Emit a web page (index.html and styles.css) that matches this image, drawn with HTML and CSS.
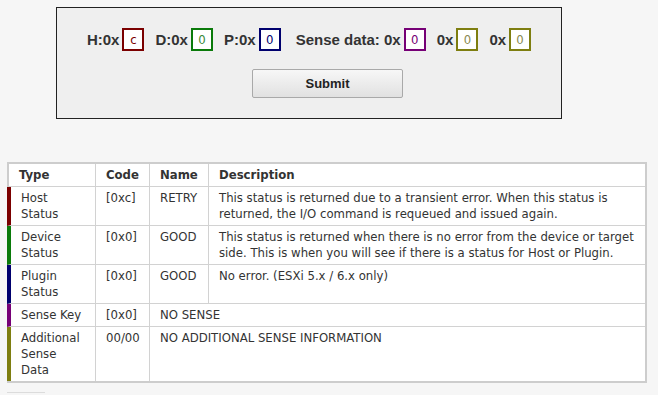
FILE: index.html
```html
<!DOCTYPE html>
<html lang="en">

<head>
    <meta charset="UTF-8">
    <meta name="viewport" content="width=device-width, initial-scale=1.0">
    <title>SCSI Sense Code Decoder</title>
    <link rel="stylesheet" href="styles.css">
</head>

<body>
    <!-- Formulario de codigos -->
    <div class="decoder">
        <div class="code-row">
            <span class="label">H:0x</span>
            <span class="code-box host">c</span>
            <span class="label">D:0x</span>
            <span class="code-box device">0</span>
            <span class="label">P:0x</span>
            <span class="code-box plugin">0</span>
            <span class="label wide">Sense data: 0x</span>
            <span class="code-box sense">0</span>
            <span class="label">0x</span>
            <span class="code-box extra">0</span>
            <span class="label">0x</span>
            <span class="code-box extra">0</span>
        </div>
        <button class="submit">Submit</button>
    </div>

    <!-- Tabla de resultados -->
    <table class="result">
        <thead>
            <tr>
                <th class="col-type">Type</th>
                <th class="col-code">Code</th>
                <th class="col-name">Name</th>
                <th class="col-desc">Description</th>
            </tr>
        </thead>
        <tbody>
            <tr class="row-host">
                <td>Host<br>Status</td>
                <td>[0xc]</td>
                <td>RETRY</td>
                <td>This status is returned due to a transient error. When this status is returned, the I/O command is requeued and issued again.</td>
            </tr>
            <tr class="row-device">
                <td>Device<br>Status</td>
                <td>[0x0]</td>
                <td>GOOD</td>
                <td>This status is returned when there is no error from the device or target side. This is when you will see if there is a status for Host or Plugin.</td>
            </tr>
            <tr class="row-plugin">
                <td>Plugin<br>Status</td>
                <td>[0x0]</td>
                <td>GOOD</td>
                <td>No error. (ESXi 5.x / 6.x only)</td>
            </tr>
            <tr class="row-sense">
                <td>Sense Key</td>
                <td>[0x0]</td>
                <td colspan="2">NO SENSE</td>
            </tr>
            <tr class="row-extra">
                <td>Additional<br>Sense<br>Data</td>
                <td>00/00</td>
                <td colspan="2">NO ADDITIONAL SENSE INFORMATION</td>
            </tr>
        </tbody>
    </table>
    <div class="next-rule"></div>
</body>

</html>
```

FILE: styles.css
```css
/* Estilos generales */
body {
    font-family: "DejaVu Sans Condensed", "DejaVu Sans", sans-serif;
    background-color: #f6f6f6;
    color: #333;
    margin: 0;
    padding: 7px 0 0 7px;
}

/* Caja del formulario */
.decoder {
    box-sizing: border-box;
    width: 506px;
    height: 112px;
    margin-left: 49px;
    padding: 20px 0 0 0;
    background-color: #efefef;
    border: 1px solid #222;
}

.code-row {
    display: flex;
    align-items: center;
    justify-content: center;
    height: 23px;
}

.label {
    font-family: "Liberation Sans", Arial, sans-serif;
    font-weight: bold;
    font-size: 15px;
    color: #333;
    margin: 0 3px 0 11px;
}

.label:first-child {
    margin-left: 0;
}

.label.wide {
    margin-left: 15px;
}

.code-box {
    box-sizing: border-box;
    width: 22px;
    height: 23px;
    border: 2px solid;
    background-color: #fff;
    font-family: "DejaVu Sans Condensed", sans-serif;
    font-size: 13px;
    line-height: 19px;
    text-align: center;
}

.host { border-color: #7b0000; color: #7b0000; }
.device { border-color: #0a7a0a; color: #3a8a3a; }
.plugin { border-color: #00006e; color: #00006e; }
.sense { border-color: #760076; color: #760076; }
.extra { border-color: #7e7e10; color: #8a8a50; }

.submit {
    display: block;
    box-sizing: border-box;
    width: 151px;
    height: 29px;
    margin: 18px 0 0 195px;
    padding: 0;
    font-family: "Liberation Sans", Arial, sans-serif;
    font-weight: bold;
    font-size: 13px;
    color: #222;
    background: linear-gradient(#f7f7f7, #e1e1e1);
    border: 1px solid #a9a9a9;
    border-radius: 2px;
}

/* Tabla de resultados */
.result {
    table-layout: fixed;
    width: 640px;
    margin-top: 43px;
    border-collapse: separate;
    border-spacing: 0;
    background-color: #fff;
    border: 2px solid #cdcdcd;
    border-left: none;
    font-size: 13px;
    line-height: 16px;
}

.result th,
.result td {
    box-sizing: border-box;
    padding: 3px 10px 3px 10px;
    text-align: left;
    vertical-align: top;
    border-right: 1px solid #d2d2d2;
    border-bottom: 1px solid #d2d2d2;
}

.result th {
    font-weight: bold;
}

.result th:last-child,
.result td:last-child {
    border-right: none;
}

.result tbody tr:last-child td {
    border-bottom: none;
}

.col-type { width: 89px; border-left: 2px solid #cdcdcd; }
.col-code { width: 54px; }
.col-name { width: 59px; }

.result td:first-child {
    border-left: 4px solid;
}

.row-host td:first-child { border-left-color: #7b0000; }
.row-device td:first-child { border-left-color: #0a7a0a; }
.row-plugin td:first-child { border-left-color: #00006e; }
.row-sense td:first-child { border-left-color: #760076; }
.row-extra td:first-child { border-left-color: #7e7e10; }

.next-rule {
    width: 38px;
    margin-top: 9px;
    border-top: 1px solid #dcdcdc;
}
```
